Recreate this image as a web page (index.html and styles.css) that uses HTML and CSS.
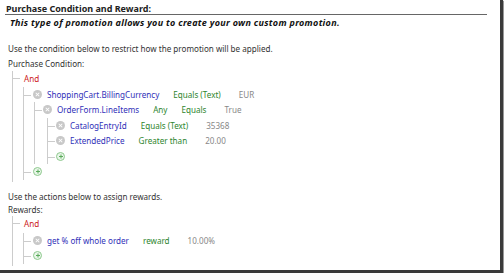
FILE: index.html
```html
<!DOCTYPE html>
<html lang="en">
<head>
	<meta charset="UTF-8">
	<title>Purchase Condition and Reward</title>
	<link rel="stylesheet" href="styles.css">
</head>
<body>
	<div class="frame">
		<h2 class="title">Purchase Condition and Reward:</h2>
		<p class="intro">This type of promotion allows you to create your own custom promotion.</p>

		<p class="hint">Use the condition below to restrict how the promotion will be applied.</p>
		<p class="label">Purchase Condition:</p>
		<div class="tree">
			<div class="row and">And</div>
			<ul class="branch b1">
				<li>
					<div class="row"><span class="ico del"></span><span class="field">ShoppingCart.BillingCurrency</span><span class="op">Equals (Text)</span><span class="val">EUR</span></div>
					<ul class="branch b2">
						<li>
							<div class="row"><span class="ico del"></span><span class="field">OrderForm.LineItems</span><span class="op">Any</span><span class="op">Equals</span><span class="val">True</span></div>
							<ul class="branch b3">
								<li><div class="row"><span class="ico del"></span><span class="field">CatalogEntryId</span><span class="op">Equals (Text)</span><span class="val">35368</span></div></li>
								<li><div class="row"><span class="ico del"></span><span class="field">ExtendedPrice</span><span class="op">Greater than</span><span class="val">20.00</span></div></li>
								<li><div class="row"><span class="ico add"></span></div></li>
							</ul>
						</li>
					</ul>
				</li>
				<li><div class="row"><span class="ico add"></span></div></li>
			</ul>
		</div>

		<p class="hint gap">Use the actions below to assign rewards.</p>
		<p class="label tight">Rewards:</p>
		<div class="tree rewards">
			<div class="row and">And</div>
			<ul class="branch b1">
				<li><div class="row"><span class="ico del"></span><span class="field">get % off whole order</span><span class="op">reward</span><span class="val">10.00%</span></div></li>
				<li><div class="row"><span class="ico add"></span></div></li>
			</ul>
		</div>
	</div>
</body>
</html>
```

FILE: styles.css
```css
*{
	margin: 0px;
	padding: 0px;
}
body{
	background: #fff;
	font-family: "Noto Sans", "Open Sans", sans-serif;
	font-size: 8.1px;
	color: #333;
}
ul{
	list-style: none;
}
.frame{
	width: 503px;
	height: 273px;
	border-right: 3px solid #3a3a3a;
	border-bottom: 3px solid #3a3a3a;
	box-shadow: 1px 1px 1px #999;
	padding-top: 3px;
	box-sizing: border-box;
}
.title{
	font-size: 9px;
	font-weight: bold;
	color: #222;
	margin: 0 13px 0 5px;
	padding-left: 1px;
	line-height: 11px;
	border-bottom: 1px solid #666;
}
.intro{
	font-size: 9px;
	font-weight: bold;
	font-style: italic;
	color: #111;
	letter-spacing: .3px;
	margin-left: 10px;
	line-height: 16px;
}
.hint{
	margin: 10px 0 0 8px;
	line-height: 15px;
}
.hint.gap{
	margin-top: 7px;
}
.label{
	margin-left: 8px;
	line-height: 15px;
}
.label.tight{
	line-height: 12px;
}
.tree{
	margin-left: 12px;
	border-left: 1px solid #ccc;
	padding-bottom: 2px;
}
.row{
	display: flex;
	align-items: center;
	height: 15.5px;
}
.and{
	color: #cc2020;
	padding-left: 11px;
	position: relative;
}
.rewards .and{
	margin-bottom: 1.5px;
}
.and::before{
	content: "";
	position: absolute;
	left: 0;
	top: 7px;
	width: 7px;
	border-top: 1px solid #ccc;
}
.branch{
	border-left: 1px solid #ccc;
}
.branch li{
	position: relative;
}
.branch li::before{
	content: "";
	position: absolute;
	top: 8px;
	width: 7px;
	border-top: 1px solid #ccc;
}
.b1{
	margin-left: 10px;
	padding-left: 9px;
}
.b1 > li::before{
	left: -9px;
}
.b2{
	margin-left: 1px;
	padding-left: 8px;
}
.b2 > li::before{
	left: -8px;
}
.b3{
	margin-left: 4px;
	padding-left: 8px;
}
.b3 > li::before{
	left: -8px;
}
.ico{
	width: 9px;
	height: 9px;
	border-radius: 50%;
	margin-right: 5px;
	flex: none;
	position: relative;
}
.del{
	background: #c8c8c8;
}
.del::before,
.del::after{
	content: "";
	position: absolute;
	left: 2px;
	top: 4px;
	width: 5px;
	height: 1px;
	background: #fff;
	transform: rotate(45deg);
}
.del::after{
	transform: rotate(-45deg);
}
.add{
	border: 1px solid #8ec98e;
	background: #e9f6e9;
	box-sizing: border-box;
}
.add::before,
.add::after{
	content: "";
	position: absolute;
	left: 1.5px;
	top: 3px;
	width: 4px;
	height: 1px;
	background: #5aaa5a;
}
.add::after{
	transform: rotate(90deg);
}
.field{
	color: #3030b8;
	margin-right: 14px;
}
.op{
	color: #2e852e;
	margin-right: 14px;
}
.op + .val{
	margin-left: 4px;
}
.val{
	color: #888;
}
```
